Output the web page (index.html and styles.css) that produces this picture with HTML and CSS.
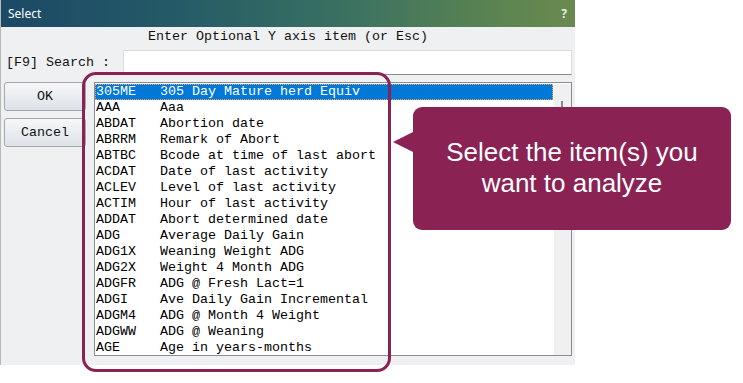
FILE: index.html
```html
<!DOCTYPE html>
<html lang="en">
<head>
  <meta charset="UTF-8">
  <title>Select</title>
  <link rel="stylesheet" href="styles.css">
</head>
<body>
<div class="dialog">
  <div class="titlebar">
    <span class="title">Select</span>
    <span class="help">?</span>
  </div>
  <div class="prompt">Enter Optional Y axis item (or Esc)</div>
  <div class="search-row">
    <label class="search-label">[F9] Search :</label>
    <div class="search-input"></div>
  </div>
  <div class="main">
    <div class="buttons">
      <button class="btn">OK</button>
      <button class="btn">Cancel</button>
    </div>
    <div class="listbox">
      <ul class="items">
        <li class="item selected"><span class="code">305ME</span>305 Day Mature herd Equiv</li>
        <li class="item"><span class="code">AAA</span>Aaa</li>
        <li class="item"><span class="code">ABDAT</span>Abortion date</li>
        <li class="item"><span class="code">ABRRM</span>Remark of Abort</li>
        <li class="item"><span class="code">ABTBC</span>Bcode at time of last abort</li>
        <li class="item"><span class="code">ACDAT</span>Date of last activity</li>
        <li class="item"><span class="code">ACLEV</span>Level of last activity</li>
        <li class="item"><span class="code">ACTIM</span>Hour of last activity</li>
        <li class="item"><span class="code">ADDAT</span>Abort determined date</li>
        <li class="item"><span class="code">ADG</span>Average Daily Gain</li>
        <li class="item"><span class="code">ADG1X</span>Weaning Weight ADG</li>
        <li class="item"><span class="code">ADG2X</span>Weight 4 Month ADG</li>
        <li class="item"><span class="code">ADGFR</span>ADG @ Fresh Lact=1</li>
        <li class="item"><span class="code">ADGI</span>Ave Daily Gain Incremental</li>
        <li class="item"><span class="code">ADGM4</span>ADG @ Month 4 Weight</li>
        <li class="item"><span class="code">ADGWW</span>ADG @ Weaning</li>
        <li class="item"><span class="code">AGE</span>Age in years-months</li>
      </ul>
      <div class="scrollbar"><div class="thumb"></div></div>
    </div>
  </div>
</div>

<div class="ring"></div>
<div class="callout">Select the item(s) you<br>want to analyze</div>
</body>
</html>
```

FILE: styles.css
```css
:root{
  --plum: #8a2253;
  --dialog-bg: #eff0f1;
  --mono: "Liberation Mono", "Courier New", monospace;
}
body{
  margin: 0;
  padding: 0;
  background: #fff;
  position: relative;
  width: 743px;
  height: 383px;
  overflow: hidden;
}
.dialog{
  width: 574px;
  height: 365px;
  background: var(--dialog-bg);
  border-left: 1px solid #b8b9bb;
  font-family: var(--mono);
  font-size: 13.33px;
  color: #111;
}
.titlebar{
  height: 27px;
  display: flex;
  align-items: center;
  justify-content: space-between;
  padding: 0 8px 0 7px;
  background: linear-gradient(90deg, #1c4966 0%, #245a67 30%, #3a7161 60%, #5a8352 85%, #6a8a4f 100%);
  color: #fff;
  font-family: "Noto Sans", "Liberation Sans", sans-serif;
}
.title{
  font-size: 12px;
}
.help{
  font-size: 12px;
  font-weight: bold;
  color: #e8ece4;
}
.prompt{
  margin-top: 2px;
  height: 16px;
  line-height: 16px;
  text-align: center;
}
.search-row{
  margin-top: 5px;
  display: flex;
  align-items: center;
  padding-left: 5px;
}
.search-label{
  flex: 0 0 117px;
}
.search-input{
  width: 447px;
  height: 23px;
  background: #fff;
  border: 1px solid #dcdcdc;
  border-bottom-color: #8a8a90;
}
.main{
  margin-top: 7px;
  display: flex;
  gap: 8px;
  padding-left: 3px;
}
.buttons{
  display: flex;
  flex-direction: column;
  gap: 7px;
  width: 82px;
}
.btn{
  height: 29px;
  font-family: var(--mono);
  font-size: 13.33px;
  color: #111;
  border: 1px solid #a3a8ae;
  border-radius: 3px;
  background: linear-gradient(#f6f7f9, #e9edf1 50%, #dde2e8);
  padding: 0;
}
.listbox{
  width: 476px;
  height: 272px;
  border: 1px solid #8c8d94;
  background: #fff;
  display: flex;
  overflow: hidden;
}
.items{
  list-style: none;
  margin: 0;
  padding: 1px 0 0;
  width: 459px;
}
.item{
  height: 16px;
  line-height: 16px;
  padding-left: 1px;
  white-space: pre;
  color: #000;
}
.item.selected{
  background: #0078d7;
  color: #fff;
  outline: 1px dotted #f4a460;
  outline-offset: -1px;
  margin-right: 1px;
}
.code{
  display: inline-block;
  width: 64px;
}
.scrollbar{
  width: 17px;
  margin-top: 1px;
  background: #f0f0f0;
  position: relative;
}
.thumb{
  position: absolute;
  left: 7px;
  top: 17px;
  width: 2px;
  height: 12px;
  background: #888;
}
.ring{
  position: absolute;
  left: 82px;
  top: 72px;
  width: 309px;
  height: 300px;
  box-sizing: border-box;
  border: 3px solid var(--plum);
  border-radius: 14px;
}
.callout{
  position: absolute;
  left: 413px;
  top: 107px;
  width: 318px;
  height: 123px;
  box-sizing: border-box;
  padding-top: 30px;
  border-radius: 9px;
  background: var(--plum);
  color: #fff;
  font-family: "Liberation Sans", Arial, sans-serif;
  font-size: 26px;
  line-height: 31px;
  text-align: center;
}
.callout:before{
  content: "";
  position: absolute;
  left: -20px;
  top: 25px;
  border-right: 20px solid var(--plum);
  border-top: 10.5px solid transparent;
  border-bottom: 10.5px solid transparent;
}
```
